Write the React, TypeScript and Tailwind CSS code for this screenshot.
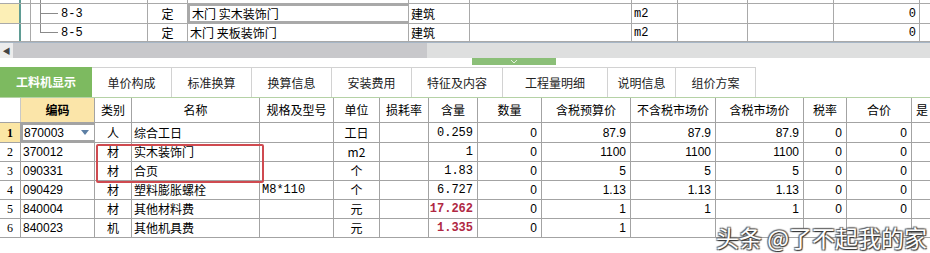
import clsx from 'clsx'

const cjk = "font-['Noto_Sans_CJK_SC','Noto_Sans',sans-serif]"
const mono = "font-['Liberation_Mono','Noto_Sans_CJK_SC',monospace]"
const sans = "font-['Liberation_Sans','Noto_Sans_CJK_SC',sans-serif]"

interface Col { w: number; label: string; align: 'l' | 'c' | 'r'; font?: string }

const cols: Col[] = [
  { w: 74, label: '编码', align: 'l', font: sans },
  { w: 37, label: '类别', align: 'c' },
  { w: 128, label: '名称', align: 'l' },
  { w: 74, label: '规格及型号', align: 'l', font: mono },
  { w: 46, label: '单位', align: 'c' },
  { w: 49, label: '损耗率', align: 'r', font: mono },
  { w: 49, label: '含量', align: 'r', font: mono },
  { w: 64, label: '数量', align: 'r', font: sans },
  { w: 89, label: '含税预算价', align: 'r', font: sans },
  { w: 85, label: '不含税市场价', align: 'r', font: sans },
  { w: 88, label: '含税市场价', align: 'r', font: sans },
  { w: 43, label: '税率', align: 'r', font: sans },
  { w: 65, label: '合价', align: 'r', font: sans },
  { w: 18, label: '是否', align: 'l' },
]

// last row: values under the watermark are left out
const rows: string[][] = [
  ['870003', '人', '综合工日', '', '工日', '', '0.259', '0', '87.9', '87.9', '87.9', '0', '0', ''],
  ['370012', '材', '实木装饰门', '', 'm2', '', '1', '0', '1100', '1100', '1100', '0', '0', ''],
  ['090331', '材', '合页', '', '个', '', '1.83', '0', '5', '5', '5', '0', '0', ''],
  ['090429', '材', '塑料膨胀螺栓', 'M8*110', '个', '', '6.727', '0', '1.13', '1.13', '1.13', '0', '0', ''],
  ['840004', '材', '其他材料费', '', '元', '', '17.262', '0', '1', '1', '1', '0', '0', ''],
  ['840023', '机', '其他机具费', '', '元', '', '1.335', '0', '1', '', '', '', '', ''],
]

const tabs = [
  { label: '工料机显示', w: 92 },
  { label: '单价构成', w: 80 },
  { label: '标准换算', w: 80 },
  { label: '换算信息', w: 80 },
  { label: '安装费用', w: 80 },
  { label: '特征及内容', w: 91 },
  { label: '工程量明细', w: 105 },
  { label: '说明信息', w: 68 },
  { label: '组价方案', w: 80 },
]

function TopRow({ code, last, selected, h }: { code: string; last?: boolean; selected?: boolean; h: number }) {
  const cell = 'h-full border-r border-[#a9a9a9] shrink-0 flex items-center'
  return (
    <div className="flex border-b border-[#a9a9a9]" style={{ height: h }}>
      <div className={clsx(cell, 'w-[21px] border-r-2 border-r-[#5f9c94]', selected ? 'bg-[#fcefb6]' : 'bg-white')} />
      <div className={clsx(cell, 'w-[10px]')} />
      <div className={clsx(cell, 'w-[117px]', mono)}>
        <div className="w-[9px]" />
        <div className="w-[18px] h-full flex flex-col">
          <div className="h-1/2 border-l border-b border-[#8a8a8a]" />
          {!last && <div className="h-1/2 border-l border-[#8a8a8a]" />}
        </div>
        <span className="ml-[3px] text-[12px] text-black">{code}</span>
      </div>
      <div className={clsx(cell, 'w-[40px] justify-center text-[12px]', cjk)}>定</div>
      <div className={clsx(cell, 'w-[221px] text-[12px] pl-[2px]', cjk, selected && 'border-2 border-[#5d9eae]')}>
        {last ? '木门 夹板装饰门' : '木门 实木装饰门'}
      </div>
      <div className={clsx(cell, 'w-[61px] text-[12px] pl-[2px]', cjk)}>建筑</div>
      <div className={clsx(cell, 'w-[162px]')} />
      <div className={clsx(cell, 'w-[46px] text-[12px] pl-[2px]', mono)}>m2</div>
      <div className={clsx(cell, 'w-[70px]')} />
      <div className={clsx(cell, 'w-[86px]')} />
      <div className={clsx(cell, 'w-[86px] justify-end pr-[3px] text-[12px]', mono)}>0</div>
      <div className="w-[10px] shrink-0" />
    </div>
  )
}

export default function App() {
  return (
    <div className={clsx('w-[930px] h-[253px] bg-white overflow-hidden relative text-black', cjk)}>
      {/* upper grid, first row scrolled out of view */}
      <div className="flex h-[4px] border-b border-[#a9a9a9] overflow-hidden">
        <div className="w-[21px] h-full border-r-2 border-[#5f9c94] shrink-0" />
        <div className="w-[10px] h-full border-r border-[#a9a9a9] shrink-0" />
        <div className="w-[117px] h-full border-r border-[#a9a9a9] shrink-0 flex">
          <div className="w-[9px]" />
          <div className="h-full border-l border-[#8a8a8a]" />
        </div>
        <div className="w-[40px] h-full border-r border-[#a9a9a9] shrink-0" />
        <div className="w-[221px] h-full border-r border-[#a9a9a9] shrink-0" />
        <div className="w-[61px] h-full border-r border-[#a9a9a9] shrink-0" />
        <div className="w-[162px] h-full border-r border-[#a9a9a9] shrink-0" />
        <div className="w-[46px] h-full border-r border-[#a9a9a9] shrink-0" />
        <div className="w-[70px] h-full border-r border-[#a9a9a9] shrink-0" />
        <div className="w-[86px] h-full border-r border-[#a9a9a9] shrink-0" />
        <div className="w-[86px] h-full border-r border-[#a9a9a9] shrink-0" />
      </div>
      <TopRow code="8-3" selected h={20} />
      <div className="border-b border-[#a6b6c6]">
        <TopRow code="8-5" last h={18} />
      </div>

      {/* scrollbar */}
      <div className="flex h-[15px]">
        <div className="w-[13px] bg-[#ececec] flex items-center justify-center text-[8px] text-[#444]">◀</div>
        <div className="w-[414px] bg-[#c8c8cb]" />
        <div className="flex-1 bg-[#dedfdf]" />
      </div>

      {/* splitter */}
      <div className="h-[9px] flex">
        <div className="ml-[472px] w-[84px] h-[7px] bg-[#8bbf78] flex items-center justify-center">
          <svg width="8" height="5" viewBox="0 0 8 5"><path d="M1 1 L4 4 L7 1" stroke="#e3f0dc" strokeWidth="1" fill="none" /></svg>
        </div>
      </div>

      {/* tabs */}
      <div className="flex h-[31px] border-b border-[#b5d2a6]">
        {tabs.map((t, i) => (
          <div
            key={t.label}
            className={clsx(
              'h-full shrink-0 flex items-center justify-center text-[12px]',
              i === 0 ? 'bg-[#7dba60] text-white font-bold' : 'border-t border-r border-[#d2d2d2] text-[#222]'
            )}
            style={{ width: t.w }}
          >
            {t.label}
          </div>
        ))}
      </div>

      {/* header */}
      <div className="flex h-[25px] border-b border-[#a3a3a3]">
        <div className="w-[21px] shrink-0 h-full border-r border-[#c8c8c8]" />
        {cols.map((c, i) => (
          <div
            key={c.label}
            className={clsx(
              'h-full shrink-0 flex items-center text-[12px] whitespace-nowrap overflow-hidden',
              i === cols.length - 1 ? 'justify-start pl-[4px]' : 'justify-center border-r border-[#a3a3a3]',
              i === 0 && 'bg-[#fbe5a9] font-bold'
            )}
            style={{ width: c.w }}
          >
            {i === cols.length - 1 ? '是' : c.label}
          </div>
        ))}
      </div>

      {/* rows */}
      {rows.map((r, ri) => (
        <div key={ri} className={clsx('flex border-b border-[#a3a3a3]', ri === 0 ? 'h-[20px]' : 'h-[19px]')}>
          <div
            className={clsx(
              "w-[21px] shrink-0 h-full border-r border-[#a3a3a3] flex items-center justify-center text-[12px] font-['Liberation_Serif',serif]",
              ri === 0 && 'bg-[#fbe6a4] font-bold'
            )}
          >
            {ri + 1}
          </div>
          {cols.map((c, ci) => {
            const v = r[ci]
            const red = ci === 6 && (ri === 4 || ri === 5)
            const picked = ri === 0 && ci === 0
            return (
              <div
                key={ci}
                className={clsx(
                  'h-full shrink-0 flex items-center text-[12px] whitespace-nowrap overflow-hidden',
                  ci < cols.length - 1 && 'border-r border-[#a3a3a3]',
                  c.font,
                  picked
                    ? 'border-2 border-[#4f9a9a] justify-between pl-[1px] pr-[5px]'
                    : c.align === 'l'
                      ? 'justify-start pl-[2px]'
                      : c.align === 'c'
                        ? 'justify-center'
                        : 'justify-end pr-[4px]',
                  red && 'text-[#b02843] font-bold'
                )}
                style={{ width: c.w }}
              >
                {v}
                {picked && (
                  <svg width="8" height="5" viewBox="0 0 8 5"><path d="M0 0 H8 L4 5 Z" fill="#5d7fa4" /></svg>
                )}
              </div>
            )
          })}
        </div>
      ))}

      {/* highlight box */}
      <div className="absolute left-[96px] top-[144px] w-[168px] h-[39px] border-2 border-[#cf4a50] rounded-[2px]" />

      {/* watermark */}
      <div className="absolute right-[3px] bottom-[2px] text-[23px] leading-[27px] text-white [text-shadow:1px_1px_1px_#333,-1px_-1px_1px_#666,1px_-1px_1px_#666,-1px_1px_1px_#666]">
        头条 @了不起我的家
      </div>
    </div>
  )
}
